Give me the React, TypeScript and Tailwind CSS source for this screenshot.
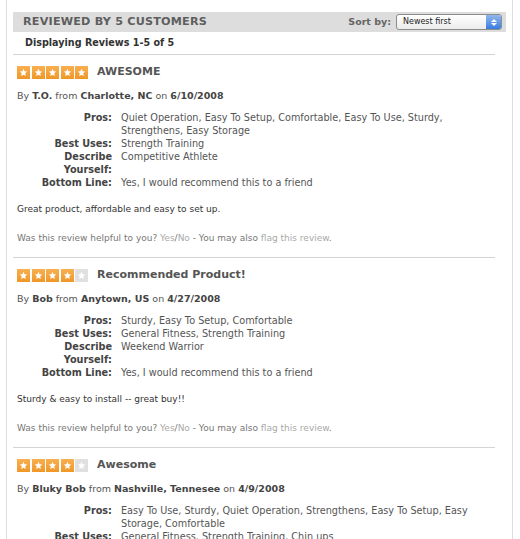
import React from "react";

interface Review {
  rating: number;
  title: string;
  author: string;
  location: string;
  date: string;
  pros: string;
  bestUses: string;
  describe: string;
  bottomLine: string;
  body: string;
}

const reviews: Review[] = [
  {
    rating: 5,
    title: "AWESOME",
    author: "T.O.",
    location: "Charlotte, NC",
    date: "6/10/2008",
    pros: "Quiet Operation, Easy To Setup, Comfortable, Easy To Use, Sturdy, Strengthens, Easy Storage",
    bestUses: "Strength Training",
    describe: "Competitive Athlete",
    bottomLine: "Yes, I would recommend this to a friend",
    body: "Great product, affordable and easy to set up.",
  },
  {
    rating: 4,
    title: "Recommended Product!",
    author: "Bob",
    location: "Anytown, US",
    date: "4/27/2008",
    pros: "Sturdy, Easy To Setup, Comfortable",
    bestUses: "General Fitness, Strength Training",
    describe: "Weekend Warrior",
    bottomLine: "Yes, I would recommend this to a friend",
    body: "Sturdy & easy to install -- great buy!!",
  },
  {
    rating: 4,
    title: "Awesome",
    author: "Bluky Bob",
    location: "Nashville, Tennesee",
    date: "4/9/2008",
    pros: "Easy To Use, Sturdy, Quiet Operation, Strengthens, Easy To Setup, Easy Storage, Comfortable",
    bestUses: "General Fitness, Strength Training, Chin ups",
    describe: "Weekend Warrior",
    bottomLine: "Yes, I would recommend this to a friend",
    body: "",
  },
];

function Star({ on }: { on: boolean }) {
  return (
    <div
      className={
        on
          ? "w-[13px] h-[13px] flex items-center justify-center bg-gradient-to-b from-[#f8b050] to-[#ef9726]"
          : "w-[13px] h-[13px] flex items-center justify-center bg-[#e0e0e0]"
      }
    >
      <svg width="9" height="9" viewBox="0 0 24 24">
        <path
          d="M12 2l2.9 6.9 7.1.6-5.4 4.7 1.7 7.3L12 17.8 5.7 21.5l1.7-7.3L2 9.5l7.1-.6z"
          fill="#fff"
        />
      </svg>
    </div>
  );
}

function Row({ label, label2, value }: { label: string; label2?: string; value: string }) {
  return (
    <div className="flex">
      <div className="w-[99px] shrink-0 text-right font-bold text-[#444]">
        {label}
        {label2 && <div>{label2}</div>}
      </div>
      <div className="pl-[9px] pr-[16px] text-[#555]">{value}</div>
    </div>
  );
}

function ReviewItem({ review, last }: { review: Review; last: boolean }) {
  return (
    <div className={last ? "pt-[8.5px]" : "pt-[8.5px] pb-[12.5px] border-b border-[#d4d4d4] mr-[11px]"}>
      {/* Stars + title */}
      <div className="flex items-center h-[17px] pl-[4px]">
        <div className="flex gap-[1.5px]">
          {[0, 1, 2, 3, 4].map((i) => (
            <Star key={i} on={i < review.rating} />
          ))}
        </div>
        <span className="ml-[9px] text-[11px] font-bold text-[#555]">{review.title}</span>
      </div>

      <div className="mt-[8px] pl-[4px] text-[9.5px] leading-[14px] text-[#555]">
        By <b className="text-[#444]">{review.author}</b> from{" "}
        <b className="text-[#444]">{review.location}</b> on{" "}
        <b className="text-[#444]">{review.date}</b>
      </div>

      <div className="mt-[8.5px] text-[9.7px] leading-[13px]">
        <Row label="Pros:" value={review.pros} />
        <Row label="Best Uses:" value={review.bestUses} />
        <Row label="Describe" label2="Yourself:" value={review.describe} />
        <Row label="Bottom Line:" value={review.bottomLine} />
      </div>

      {review.body && (
        <>
          <p className="mt-[14px] pl-[4px] text-[9px] leading-[13px] text-[#333]">{review.body}</p>
          <p className="mt-[15.5px] pl-[4px] text-[9px] leading-[13px] text-[#777]">
            Was this review helpful to you? <span className="text-[#a9a9a9]">Yes</span>/
            <span className="text-[#a9a9a9]">No</span> - You may also{" "}
            <span className="text-[#a9a9a9]">flag this review</span>.
          </p>
        </>
      )}
    </div>
  );
}

export default function App() {
  return (
    <div className="w-[520px] h-[539px] overflow-hidden bg-white font-['DejaVu_Sans',sans-serif]">
      <div className="ml-[6px] w-[507px] h-[539px] border-l border-r border-[#dcdcdc] pl-[6px] pr-[6px] pt-[12px]">
        {/* Header */}
        <div className="h-[20px] bg-[#dddddd] flex items-center justify-between pl-[10px] pr-[4px]">
          <span className="text-[11.2px] font-bold text-[#5e5e5e] tracking-[0.2px]">REVIEWED BY 5 CUSTOMERS</span>
          <div className="flex items-center gap-[5px]">
            <span className="text-[9.5px] font-bold text-[#666]">Sort by:</span>
            <div className="w-[106px] h-[16px] rounded-[3px] border border-[#8c8c8c] bg-gradient-to-b from-white to-[#ececec] flex items-center justify-between overflow-hidden">
              <span className="pl-[6px] text-[8px] text-[#222]">Newest first</span>
              <div className="w-[15px] h-full bg-gradient-to-b from-[#8fb8ec] to-[#3a7be0] flex flex-col items-center justify-center gap-[1px]">
                <svg width="6" height="3" viewBox="0 0 6 3"><path d="M0 3L3 0L6 3z" fill="#fff" /></svg>
                <svg width="6" height="3" viewBox="0 0 6 3"><path d="M0 0L3 3L6 0z" fill="#fff" /></svg>
              </div>
            </div>
          </div>
        </div>

        <div className="mr-[11px] border-b border-[#d4d4d4] h-[23px] flex items-center pl-[12px]">
          <span className="text-[9.6px] font-bold text-[#333]">Displaying Reviews 1-5 of 5</span>
        </div>

        {reviews.map((r, i) => (
          <ReviewItem key={i} review={r} last={i === reviews.length - 1} />
        ))}
      </div>
    </div>
  );
}
